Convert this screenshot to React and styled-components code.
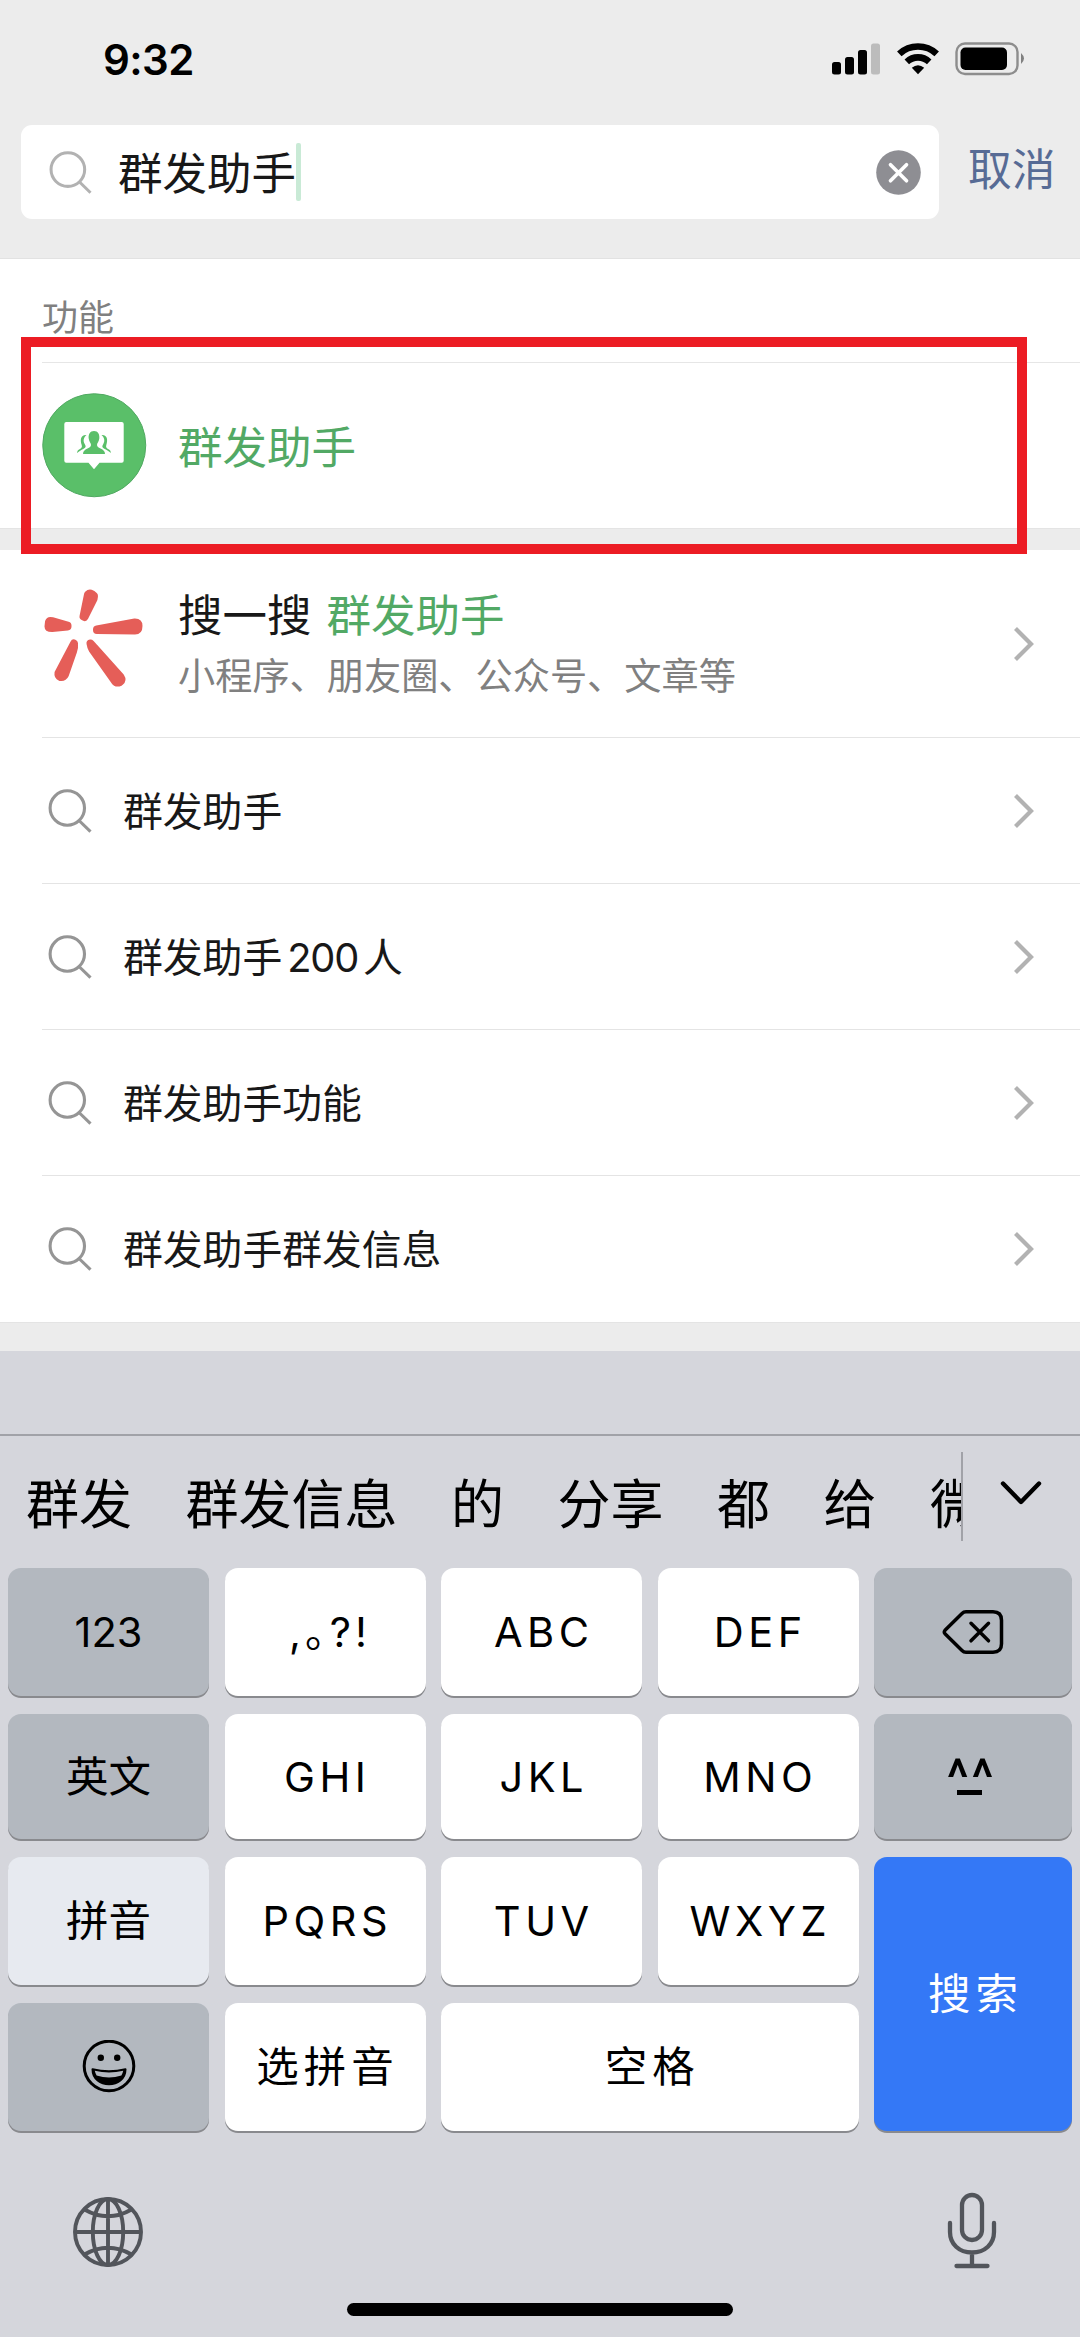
import React from 'react'
import styled, { createGlobalStyle } from 'styled-components'

const GlobalStyle = createGlobalStyle`
  * {
    box-sizing: border-box;
  }
  body {
    margin: 0;
    background: #ececec;
    font-family: Inter, "Noto Sans CJK SC", sans-serif;
    color: #181818;
  }
  svg {
    display: block;
    flex-shrink: 0;
  }
`
const Screen = styled.div`
  width: 1080px;
  height: 2337px;
  display: flex;
  flex-direction: column;
  overflow: hidden;
`
const StatusBar = styled.header`
  display: flex;
  justify-content: space-between;
  height: 125px;
  padding: 34px 55px 0 103px;
`
const Time = styled.span`
  font-size: 42px;
  font-weight: 600;
  line-height: 51px;
  letter-spacing: -0.6px;
  color: #000;
`
const StatusHolder = styled.div`
  padding-top: 8px;
`
const SearchBar = styled.div`
  display: flex;
  height: 134px;
  padding-left: 21px;
  border-bottom: 1px solid #e2e2e2;
`
const SearchField = styled.div`
  display: flex;
  align-items: center;
  width: 918px;
  height: 94px;
  padding: 0 18px 0 28px;
  border-radius: 11px;
  background: #fff;
`
const Query = styled.span`
  margin: 3px 0 0 26px;
  font-size: 44.5px;
  line-height: 60px;
`
const Caret = styled.i`
  width: 5px;
  height: 58px;
  margin-right: auto;
  border-radius: 2px;
  background: #c9ead6;
`
const Cancel = styled.span`
  margin-left: 29px;
  font-size: 43.8px;
  line-height: 92px;
  color: #576b95;
`
const Section = styled.section`
  position: relative;
  background: #fff;
`
const SectionTitle = styled.h2`
  height: 104px;
  margin: 0 0 0 42px;
  padding-top: 34px;
  border-bottom: 1px solid #e6e6e6;
  font-size: 36px;
  font-weight: 400;
  line-height: 50px;
  color: #808080;
`
const Feature = styled.div`
  display: flex;
  align-items: center;
  height: 165px;
  padding: 0 0 0 42px;
  font-size: 44.5px;
  line-height: 60px;
  color: #52a965;
`
const FeatureName = styled.span`
  margin: 4px 0 0 31px;
`
const Highlight = styled.div`
  position: absolute;
  top: 78px;
  left: 21px;
  z-index: 1;
  width: 1006px;
  height: 217px;
  border: 10px solid #ec1c24;
`
const Gap = styled.div`
  height: ${props => props.$size}px;
  border-top: 1px solid #e4e4e4;
`
const Row = styled.div`
  display: flex;
  align-items: center;
  height: ${props => props.$height || 146}px;
  margin-left: 42px;
  padding-right: 46px;
  border-bottom: ${props => props.$last ? 'none' : '1px solid #e4e4e4'};
  > :last-child {
    margin-left: auto;
  }
`
const RowIcon = styled.div`
  padding-left: 6px;
`
const RowText = styled.span`
  margin: 2px 0 0 31px;
  font-size: 39.8px;
  line-height: 54px;
`
const Digits = styled.span`
  margin: 0 5px;
  letter-spacing: -1.2px;
`
const SparkHolder = styled.div`
  margin-bottom: 12px;
`
const SearchInfo = styled.div`
  margin: 3px 0 0 31px;
`
const SearchTitle = styled.div`
  font-size: 44.5px;
  line-height: 60px;
`
const Keyword = styled.span`
  margin-left: 15px;
  color: #52a965;
`
const SearchHint = styled.div`
  margin-top: 4px;
  font-size: 37.2px;
  line-height: 54px;
  color: #808080;
`
const Keyboard = styled.div`
  flex: 1;
  padding-top: 83px;
  background: #d5d6dc;
  color: #000;
`
const Candidates = styled.div`
  display: flex;
  height: 134px;
  border-top: 2px solid #a1a2a8;
`
const CandidateList = styled.div`
  display: flex;
  gap: 53.5px;
  width: 963px;
  height: 89px;
  margin-top: 16px;
  padding-left: 26px;
  overflow: hidden;
  border-right: 2px solid #a1a2a8;
  font-size: 53px;
  line-height: 106px;
  white-space: nowrap;
`
const Candidate = styled.span`
  flex-shrink: 0;
`
const Expand = styled.div`
  padding: 44px 0 0 37px;
`
const Keys = styled.div`
  display: grid;
  grid-template-columns: repeat(4, 201px) 198px;
  grid-template-rows: 128px 125px 128px 128px;
  gap: 18px 15.5px;
  padding-left: 8px;
`
const backgrounds = {
  letter: '#fff',
  gray: '#b3b8bf',
  active: '#e7eaf0',
  action: '#3478f6'
}
const Key = styled.div`
  display: flex;
  align-items: center;
  justify-content: center;
  grid-column: span ${props => props.$cols || 1};
  grid-row: span ${props => props.$rows || 1};
  padding-left: ${props => props.$spacing || 0}px;
  border-radius: 13px;
  box-shadow: 0 2px 0 #898a8e;
  background: ${props => backgrounds[props.$kind || 'letter']};
  color: ${props => props.$kind === 'action' ? '#fff' : '#000'};
  font-size: ${props => props.$size || 41.5}px;
  line-height: 50px;
  letter-spacing: ${props => props.$spacing || 0}px;
`
const Punctuation = styled.span`
  padding-left: 6px;
  font-feature-settings: "halt";
`
const Face = styled.span`
  display: flex;
  flex-direction: column;
  align-items: center;
  height: 40px;
  margin-right: 6px;
`
const Eyes = styled.span`
  height: 33px;
  padding-left: 3px;
  font-family: Roboto, sans-serif;
  font-size: 51px;
  font-weight: 500;
  line-height: 44px;
  letter-spacing: 3px;
`
const Mouth = styled.span`
  width: 25px;
  height: 5px;
  background: #000;
`
const KeyboardFooter = styled.div`
  display: flex;
  justify-content: space-between;
  padding: 61px 83px 0 72px;
`
const GlobeHolder = styled.div`
  padding-top: 4px;
`
const HomeIndicator = styled.div`
  width: 386px;
  height: 13px;
  margin: 33px 0 0 347px;
  border-radius: 7px;
  background: #000;
`

const StatusIcons = () => (
  <svg width="194" height="34" viewBox="831 42 194 34">
    <rect x="832" y="62" width="9" height="12.5" rx="2.5"/>
    <rect x="845" y="57" width="9" height="17.5" rx="2.5"/>
    <rect x="858" y="50" width="9" height="24.5" rx="2.5"/>
    <rect x="871" y="43.5" width="9" height="31" rx="2.5" fill="#bcbcbc"/>
    <g fill="none" stroke="#000" strokeWidth="6.6">
      <path d="M899.3 53.8a27.5 27.5 0 0 1 37.4 0"/>
      <path d="M906.8 61.8a16.5 16.5 0 0 1 22.4 0"/>
    </g>
    <path d="M918 74.3l-6.2-6.6q6.2-5 12.4 0z"/>
    <rect x="956.5" y="43.5" width="61" height="30.5" rx="8.5" fill="none" stroke="#8d8d8d" strokeWidth="2.4"/>
    <rect x="960.5" y="47.5" width="46.5" height="22.5" rx="5"/>
    <path d="M1021 53q6 5.5 0 11z" fill="#808080"/>
  </svg>
)

const SearchIcon = ({ color = '#959595', size = 44 }) => (
  <svg width={size} height={size} viewBox="0 0 44 44" fill="none" stroke={color} strokeWidth="3.1">
    <circle cx="19.3" cy="19" r="17.2"/>
    <path d="M31 31.500l11.500 11.200"/>
  </svg>
)

const ClearIcon = () => (
  <svg width="45" height="45" viewBox="0 0 45 45">
    <circle cx="22.5" cy="22.5" r="22.3" fill="#8e8e93"/>
    <path d="M14.500 14.800l16 16M30.500 14.800l-16 16" stroke="#fff" strokeWidth="3.7" strokeLinecap="round"/>
  </svg>
)

const ChevronRight = () => (
  <svg width="20" height="34" viewBox="0 0 20 34" fill="none" stroke="#b2b2b2" strokeWidth="4.2">
    <path d="M1.500 1.500L17 17l-15.500 15.500"/>
  </svg>
)

const GroupIcon = () => (
  <svg width="105" height="105" viewBox="0 0 105 105">
    <circle cx="52.25" cy="52.25" r="51.5" fill="#5abf69" stroke="#51a962"/>
    <path d="M24.300 29h55.400q2 0 2 2v36.700q0 2-2 2H57.500l-5.500 6.500-5.500-6.500H24.300q-2 0-2-2V31q0-2 2-2z" fill="#fff"/>
    <g fill="#5abf69">
      <path d="M44.500 42c-6-.5-6.500 5-4.800 10 .7 2-.2 3.500-2.200 4.300-2.500 1-2.300 3.700-2.300 3.700 2-2 4-3 6-4 2.500-1.200 3.200-2.500 1.500-5-1.800-3-1.200-6.500 1.800-9z"/>
      <path d="M59.500 42c6-.5 6.500 5 4.800 10-.7 2 .2 3.500 2.200 4.300 2.500 1 2.300 3.700 2.300 3.700-2-2-4-3-6-4-2.500-1.200-3.200-2.500-1.500-5 1.800-3 1.200-6.500-1.800-9z"/>
      <path d="M52 38c-4 0-5.800 3.500-5.300 7.500.3 3 2.300 4.500 2.300 6.500 0 4-8 3-8 9h22c0-6-8-5-8-9 0-2 2-3.500 2.300-6.500.5-4-1.300-7.500-5.300-7.500z"/>
    </g>
  </svg>
)

const SparkIcon = () => (
  <svg width="105" height="105" viewBox="42 585 105 105" fill="#e55e58" stroke="#e55e58" strokeWidth="8" strokeLinejoin="round">
    <path d="M88 594.500q2.500-2.500 6 1.500l-.5 3L84.500 617l-1-.5z"/>
    <path d="M49 622q.5-1.500 3-.8l15.500 4.300v1l-15.500 1.500q-3.500 0-3.500-1.500z"/>
    <path d="M97 629.500l38-7q3.500 0 3.500 3.500 0 4.500-3.500 4.500l-38-.5z"/>
    <path d="M74 643.500q.5 4-1 8l-8 23q-1.500 3-4.500 2.500-2.500-1-2-4z"/>
    <path d="M90.500 643.500q2 2 4 4.500l26 29q2 3-.5 5-3.500 1.500-5.500-1.500l-22-31q-1.500-2.500-2-6z"/>
  </svg>
)

const ChevronDown = () => (
  <svg width="42" height="26" viewBox="0 0 42 26" fill="none" stroke="#000" strokeWidth="4.4" strokeLinecap="round" strokeLinejoin="round">
    <path d="M3 3.500l18 18.500L39 3.500"/>
  </svg>
)

const DeleteIcon = () => (
  <svg width="62" height="46" viewBox="0 0 62 46" fill="none" stroke="#000" strokeWidth="3.5" strokeLinecap="round" strokeLinejoin="round">
    <path d="M24 2.700h27q8.500 0 8.500 8.500v23.600q0 8.500-8.500 8.500H24q-2.300 0-4-1.800L3 24.700q-1.400-1.700 0-3.400L20 4.500q1.700-1.800 4-1.800z"/>
    <path d="M29 14.300l17.500 17.500M46.500 14.300L29 31.800"/>
  </svg>
)

const EmojiIcon = () => (
  <svg width="54" height="54" viewBox="0 0 54 54">
    <circle cx="27" cy="26" r="24.8" fill="none" stroke="#000" strokeWidth="3"/>
    <circle cx="18.8" cy="17.7" r="3.2"/>
    <circle cx="35.2" cy="17.7" r="3.2"/>
    <path d="M10.500 29.200q16.500 4 33 0c0 20-33 20-33 0z" stroke="#000" strokeWidth="2" strokeLinejoin="round"/>
    <path d="M12.800 30.800q14.200 3.200 28.400 0-.6 3-1.800 4.800-12.400 4-24.800 0-1.200-1.800-1.800-4.800z" fill="#b3b8bf"/>
  </svg>
)

const GlobeIcon = () => (
  <svg width="72" height="72" viewBox="0 0 72 72" fill="none" stroke="#52555b" strokeWidth="3.900">
    <circle cx="36" cy="36" r="33"/>
    <ellipse cx="36" cy="36" rx="15.2" ry="33"/>
    <path d="M36 3v66M3 36h66M12.500 13.500q23.500 13.500 47 0M12.500 58.500q23.500-13.500 47 0"/>
  </svg>
)

const MicIcon = () => (
  <svg width="50" height="78" viewBox="0 0 50 78" fill="none" stroke="#52555b" strokeWidth="4.300" strokeLinecap="round">
    <rect x="15" y="3" width="20" height="45" rx="10"/>
    <path d="M3 31v9c0 12 9 20.500 22 20.500S47 52 47 40v-9M25 61v12M9.500 74h31"/>
  </svg>
)

const candidates = ['群发', '群发信息', '的', '分享', '都', '给', '微']

export default class App extends React.Component {
  render () {
    return (
      <Screen>
        <GlobalStyle/>
        <StatusBar>
          <Time>9:32</Time>
          <StatusHolder><StatusIcons/></StatusHolder>
        </StatusBar>
        <SearchBar>
          <SearchField>
            <SearchIcon color="#b2b2b2" size={43}/>
            <Query>群发助手</Query>
            <Caret/>
            <ClearIcon/>
          </SearchField>
          <Cancel>取消</Cancel>
        </SearchBar>
        <Section>
          <SectionTitle>功能</SectionTitle>
          <Feature>
            <GroupIcon/>
            <FeatureName>群发助手</FeatureName>
          </Feature>
          <Highlight/>
        </Section>
        <Gap $size={22}/>
        <Section>
          <Row $height={188}>
            <SparkHolder><SparkIcon/></SparkHolder>
            <SearchInfo>
              <SearchTitle>搜一搜<Keyword>群发助手</Keyword></SearchTitle>
              <SearchHint>小程序、朋友圈、公众号、文章等</SearchHint>
            </SearchInfo>
            <ChevronRight/>
          </Row>
          <Row>
            <RowIcon><SearchIcon/></RowIcon>
            <RowText>群发助手</RowText>
            <ChevronRight/>
          </Row>
          <Row>
            <RowIcon><SearchIcon/></RowIcon>
            <RowText>群发助手<Digits>200</Digits>人</RowText>
            <ChevronRight/>
          </Row>
          <Row>
            <RowIcon><SearchIcon/></RowIcon>
            <RowText>群发助手功能</RowText>
            <ChevronRight/>
          </Row>
          <Row $last>
            <RowIcon><SearchIcon/></RowIcon>
            <RowText>群发助手群发信息</RowText>
            <ChevronRight/>
          </Row>
        </Section>
        <Gap $size={29}/>
        <Keyboard>
          <Candidates>
            <CandidateList>
              {candidates.map(word => <Candidate key={word}>{word}</Candidate>)}
            </CandidateList>
            <Expand><ChevronDown/></Expand>
          </Candidates>
          <Keys>
            <Key $kind="gray">123</Key>
            <Key $spacing={4}><Punctuation>,。?!</Punctuation></Key>
            <Key $spacing={4.5}>ABC</Key>
            <Key $spacing={4.5}>DEF</Key>
            <Key $kind="gray"><DeleteIcon/></Key>
            <Key $kind="gray" $size={42.5}>英文</Key>
            <Key $spacing={4.5}>GHI</Key>
            <Key $spacing={4.5}>JKL</Key>
            <Key $spacing={4.5}>MNO</Key>
            <Key $kind="gray">
              <Face>
                <Eyes>^^</Eyes>
                <Mouth/>
              </Face>
            </Key>
            <Key $kind="active" $size={42.5}>拼音</Key>
            <Key $spacing={4.5}>PQRS</Key>
            <Key $spacing={4.5}>TUV</Key>
            <Key $spacing={4.5}>WXYZ</Key>
            <Key $kind="action" $rows={2} $size={42.5} $spacing={5}>搜索</Key>
            <Key $kind="gray"><EmojiIcon/></Key>
            <Key $size={42.5} $spacing={5}>选拼音</Key>
            <Key $cols={2} $size={42.5} $spacing={5}>空格</Key>
          </Keys>
          <KeyboardFooter>
            <GlobeHolder><GlobeIcon/></GlobeHolder>
            <MicIcon/>
          </KeyboardFooter>
          <HomeIndicator/>
        </Keyboard>
      </Screen>
    )
  }
}
